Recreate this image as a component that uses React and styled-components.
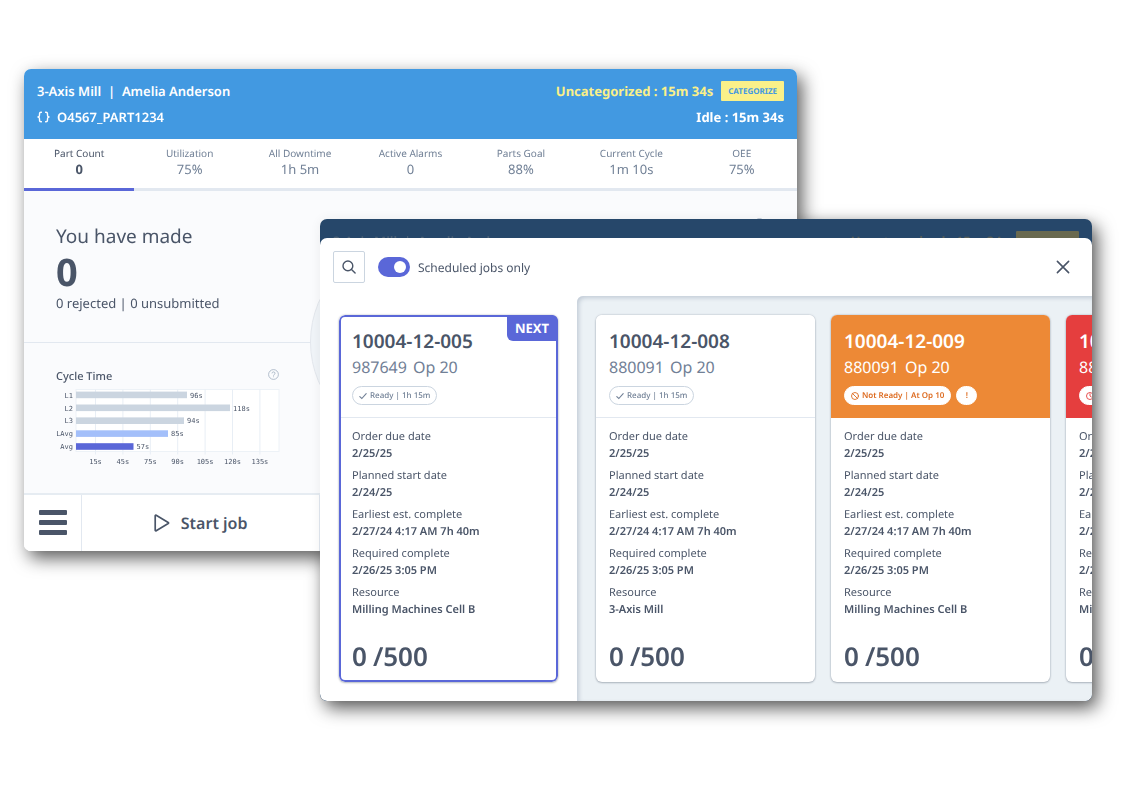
import React from "react";
import styled, { createGlobalStyle, css } from "styled-components";

const GlobalStyle = createGlobalStyle`
  * {
    box-sizing: border-box;
  }

  body {
    margin: 0;
    background: #fff;
    color: #4a5568;
    font-family: "Noto Sans", "Open Sans", sans-serif;
    text-rendering: geometricPrecision;
  }

  button {
    font-family: inherit;
    color: inherit;
    text-rendering: inherit;
    cursor: pointer;
  }
`;

const metrics = [
  { label: "Part Count", value: "0", active: true },
  { label: "Utilization", value: "75%" },
  { label: "All Downtime", value: "1h 5m" },
  { label: "Active Alarms", value: "0" },
  { label: "Parts Goal", value: "88%" },
  { label: "Current Cycle", value: "1m 10s" },
  { label: "OEE", value: "75%" },
];

const cycles = [
  { label: "L1", value: "96s", width: 111, color: "#cbd5e0" },
  { label: "L2", value: "118s", width: 154, color: "#cbd5e0" },
  { label: "L3", value: "94s", width: 108, color: "#cbd5e0" },
  { label: "LAvg", value: "85s", width: 92, color: "#a3bffa" },
  { label: "Avg", value: "57s", width: 57.5, color: "#5a67d8" },
];

const ticks = ["15s", "45s", "75s", "90s", "105s", "120s", "135s"];

const nextJob = {
  number: "10004-12-005",
  part: "987649",
  status: "ready",
  statusText: "Ready | 1h 15m",
  resource: "Milling Machines Cell B",
};

const jobs = [
  {
    number: "10004-12-008",
    part: "880091",
    status: "ready",
    statusText: "Ready | 1h 15m",
    resource: "3-Axis Mill",
  },
  {
    number: "10004-12-009",
    part: "880091",
    status: "blocked",
    statusText: "Not Ready | At Op 10",
    resource: "Milling Machines Cell B",
    alert: true,
  },
  {
    number: "10004-12-010",
    part: "880091",
    status: "late",
    statusText: "Late | 2h 10m",
    resource: "Milling Machines Cell B",
  },
];

const statusColors = {
  blocked: { background: "#ed8936", text: "#dd6b20" },
  late: { background: "#e53e3e", text: "#e53e3e" },
};

const Stage = styled.main`
  display: grid;
  grid-template-columns: 296fr 477fr 295fr;
  align-items: start;
  padding: 69px 34px 85px 24px;
  filter: drop-shadow(5px 7px 9px rgba(0, 0, 0, 0.65));
`;

const windowFrame = css`
  grid-row: 1;
  min-width: 0;
  overflow: hidden;
  border-radius: 7px;
`;

const MachineWindow = styled.section`
  ${windowFrame}
  grid-column: 1 / 3;
  background: #fafbfd;
`;

const JobsWindow = styled.section`
  ${windowFrame}
  grid-column: 2 / 4;
  margin-top: 150px;
  background: #26476a;
  box-shadow: 0 0 12px rgba(0, 0, 0, 0.06);
  z-index: 1;
`;

const Header = styled.header`
  padding: 9px 13px;
  background: #4299e1;
  color: #fff;
  font-size: 13px;
  font-weight: 600;
`;

const HeaderRow = styled.div`
  display: flex;
  align-items: center;
  justify-content: space-between;
  line-height: 26px;
  white-space: pre;
`;

const HeaderGroup = styled.div`
  display: flex;
  align-items: center;
  gap: 7px;
`;

const Idle = styled.div`
  font-weight: 700;
`;

const Uncategorized = styled.div`
  display: flex;
  align-items: center;
  gap: 8px;
  color: #faf089;
  font-weight: 700;
`;

const CategorizeButton = styled.button`
  height: 20px;
  padding: 0 7px;
  border: 0;
  border-radius: 1px;
  background: #faf089;
  color: #4299e1;
  font-size: 8px;
  font-weight: 700;
`;

const DimmedHeader = styled.div`
  height: 19px;
  padding: 9px 13px;
  overflow: hidden;
  color: #4e6377;
  font-size: 13px;
  font-weight: 600;

  ${Uncategorized} {
    color: #595f58;
  }

  ${CategorizeButton} {
    background: #69694f;
    color: #26476a;
  }
`;

const Metrics = styled.nav`
  display: grid;
  grid-template-columns: repeat(7, 1fr);
`;

const Metric = styled.button`
  display: flex;
  flex-direction: column;
  align-items: center;
  height: 52px;
  padding: 6px 0 0;
  border: 0;
  border-bottom: 3px solid ${(props) => (props.$active ? "#5a67d8" : "#e2e8f0")};
  background: #fff;
  color: ${(props) => (props.$active ? "#4a5568" : "#718096")};
  font-size: 10px;
  line-height: 16px;

  strong {
    font-size: 13px;
    font-weight: ${(props) => (props.$active ? 700 : 400)};
  }
`;

const MachineBody = styled.div`
  display: grid;
  grid-template-columns: minmax(0, 287fr) minmax(0, 199fr) minmax(0, 287fr);
  height: 302px;
`;

const Side = styled.div`
  display: flex;
  flex-direction: column;
`;

const Made = styled.div`
  height: 152px;
  padding: 32px 32px 0;
  border-bottom: 1px solid #e2e8f0;
`;

const MadeTitle = styled.h2`
  margin: 0;
  font-size: 19px;
  font-weight: 400;
  line-height: 26px;
`;

const MadeCount = styled.div`
  font-size: 38px;
  font-weight: 700;
  line-height: 46px;
`;

const MadeNote = styled.p`
  margin: 0;
  font-size: 13px;
  line-height: 16px;
`;

const Cycle = styled.div`
  padding: 23px 32px 0;
`;

const CycleHead = styled.div`
  display: flex;
  align-items: center;
  justify-content: space-between;
  height: 16px;
  margin-bottom: 7px;
`;

const CycleTitle = styled.h3`
  margin: 0;
  padding-top: 6px;
  font-size: 11px;
  font-weight: 500;
  line-height: 16px;
`;

const Chart = styled.svg`
  display: block;
  width: 100%;
  height: auto;
  overflow: visible;
  font-family: "DejaVu Sans Mono", monospace;
  font-size: 7px;
  fill: #4a5568;
`;

const Dial = styled.div`
  align-self: center;
  justify-self: center;
  width: 202px;
  height: 202px;
  border: 1px solid #e2e6ec;
  border-radius: 50%;
  background: #f0f4f8;
`;

const HelpCorner = styled.div`
  display: flex;
  justify-content: flex-end;
  padding: 27px 32px;
`;

const ActionBar = styled.footer`
  display: grid;
  grid-template-columns: 58px repeat(3, 1fr);
  height: 58px;
  border-top: 2px solid #e6ecf2;
  background: #fff;
`;

const ActionButton = styled.button`
  display: flex;
  align-items: center;
  justify-content: center;
  gap: 11px;
  padding: 0;
  border: 0;
  border-right: 1px solid #e2e8f0;
  background: #fff;
  font-size: 16px;
  font-weight: 600;
`;

const Sheet = styled.div`
  border-radius: 7px;
  overflow: hidden;
  background: #fff;
`;

const Toolbar = styled.div`
  display: flex;
  align-items: center;
  gap: 13px;
  height: 58px;
  padding: 0 22px 0 13px;
`;

const SearchButton = styled.button`
  display: flex;
  align-items: center;
  justify-content: center;
  width: 32px;
  height: 32px;
  padding: 0;
  border: 1px solid #cbd5e0;
  border-radius: 2px;
  background: #fff;
`;

const SwitchLabel = styled.label`
  display: flex;
  align-items: center;
  gap: 8px;
  font-size: 12px;
`;

const Switch = styled.input`
  display: flex;
  align-items: center;
  justify-content: flex-start;
  appearance: none;
  width: 32px;
  height: 20px;
  margin: 0;
  padding: 0 4px;
  border-radius: 10px;
  background: #cbd5e0;

  &::before {
    content: "";
    width: 12px;
    height: 12px;
    border-radius: 50%;
    background: #fff;
  }

  &:checked {
    justify-content: flex-end;
    background: #5a67d8;
  }
`;

const CloseButton = styled.button`
  display: flex;
  margin-left: auto;
  padding: 0;
  border: 0;
  background: none;
`;

const Board = styled.div`
  display: flex;
`;

const NextColumn = styled.div`
  flex: none;
  padding: 19px;
`;

const Queue = styled.div`
  display: flex;
  flex: 1;
  gap: 16px;
  min-width: 0;
  padding: 19px 0 19px 19px;
  overflow: hidden;
  border-radius: 6px 0 0 0;
  background: #ebf1f5;
  box-shadow: inset 2px 2px 4px #c3ccd7;
`;

const Card = styled.article`
  position: relative;
  display: flex;
  flex: none;
  flex-direction: column;
  width: 219px;
  height: 367px;
  overflow: hidden;
  border-radius: 6px;
  background: #fff;
  box-shadow: 0 0 2px rgba(74, 85, 104, 0.4), 0 1px 2px rgba(74, 85, 104, 0.3);

  &::after {
    content: "";
    position: absolute;
    inset: 0;
    border: ${(props) => (props.$next ? "2px solid #5a67d8" : "0")};
    border-radius: 6px;
    pointer-events: none;
  }
`;

const CardHead = styled.div`
  height: 103px;
  padding: 13px;
  border-bottom: 1px solid ${(props) => props.$background || "#e2e8f0"};
  background: ${(props) => props.$background || "#fff"};
  color: ${(props) => (props.$background ? "#fff" : "#4a5568")};
`;

const JobNumber = styled.h3`
  margin: 0;
  font-size: 19px;
  font-weight: 600;
  line-height: 26px;
`;

const JobPart = styled.div`
  display: flex;
  gap: 6px;
  color: ${(props) => (props.$light ? "#fff" : "#718096")};
  font-size: 16px;
  line-height: 26px;
`;

const Pills = styled.div`
  display: flex;
  gap: 5px;
  margin-top: 6px;
`;

const Pill = styled.span`
  display: flex;
  align-items: center;
  justify-content: center;
  gap: 3px;
  min-width: 21px;
  height: 19px;
  padding: 0 6px;
  border: 1px solid ${(props) => (props.$color ? "#fff" : "#cbd5e0")};
  border-radius: 10px;
  background: #fff;
  color: ${(props) => props.$color || "#718096"};
  font-size: 8px;
  font-weight: ${(props) => (props.$color ? 600 : 500)};
  white-space: nowrap;
`;

const NextTag = styled.span`
  position: absolute;
  top: 0;
  right: 0;
  padding: 0 9px 0 8px;
  border-radius: 0 0 0 6px;
  background: #5a67d8;
  color: #fff;
  font-size: 13px;
  font-weight: 700;
  line-height: 26px;
`;

const Details = styled.dl`
  margin: 0;
  padding: 10px 13px 0;
  font-size: 11px;
  line-height: 17px;

  dd {
    margin: 0 0 5px;
    font-weight: 600;
  }
`;

const Quantity = styled.div`
  margin-top: auto;
  padding: 0 13px 9px;
  font-size: 26px;
  font-weight: 600;
  line-height: 34px;

  span {
    margin-left: 6px;
  }
`;

const HelpIcon = () => (
  <svg width="11" height="11" viewBox="0 0 11 11" fill="none" stroke="#a0aec0" strokeWidth="0.8">
    <circle cx="5.5" cy="5.5" r="4.9" />
    <path d="M4 4.4a1.5 1.5 0 1 1 2.2 1.3c-.5.3-.7.5-.7 1M5.5 7.4v.8" />
  </svg>
);

const BracesIcon = () => (
  <svg width="13" height="12" viewBox="0 0 13 12" fill="none" stroke="#fff" strokeWidth="1.4" strokeLinecap="round" strokeLinejoin="round">
    <path d="M4.4 1.2H4C2.9 1.2 2.5 1.8 2.5 2.7v1.5C2.5 5.2 2 5.8 1 6c1 .2 1.5.8 1.5 1.8v1.5c0 .9.4 1.5 1.5 1.5h.4" />
    <path d="M8.6 1.2H9c1.1 0 1.5.6 1.5 1.5v1.5c0 1 .5 1.6 1.5 1.8-1 .2-1.5.8-1.5 1.8v1.5c0 .9-.4 1.5-1.5 1.5h-.4" />
  </svg>
);

const MenuIcon = () => (
  <svg width="28" height="26" viewBox="0 0 28 26" fill="#4a5568">
    <rect y="0" width="28" height="5" rx="1" />
    <rect y="10" width="28" height="5" rx="1" />
    <rect y="20" width="28" height="5" rx="1" />
  </svg>
);

const PlayIcon = () => (
  <svg width="16" height="18" viewBox="0 0 16 18" fill="none" stroke="#4a5568" strokeWidth="1.7" strokeLinejoin="round">
    <path d="M1.2 1.8v14.4c0 .6.5.8 1 .5l12-7.1c.5-.3.5-.9 0-1.2l-12-7.1c-.5-.3-1-.1-1 .5z" />
  </svg>
);

const SearchIcon = () => (
  <svg width="14" height="14" viewBox="0 0 14 14" fill="none" stroke="#4a5568" strokeWidth="1.4" strokeLinecap="round">
    <circle cx="5.9" cy="5.9" r="4.9" />
    <path d="M9.5 9.5l3.6 3.6" />
  </svg>
);

const CloseIcon = () => (
  <svg width="14" height="14" viewBox="0 0 14 14" fill="none" stroke="#4a5568" strokeWidth="1.6" strokeLinecap="round">
    <path d="M1.4 1.4l11.2 11.2M12.6 1.4L1.4 12.6" />
  </svg>
);

const StatusIcon = ({ status }) => (
  <svg width="8" height="8" viewBox="0 0 8 8" fill="none" stroke="currentColor" strokeWidth={status === "ready" ? 1.1 : 0.9} strokeLinecap="round">
    {status === "ready" && <path d="M.8 4.6l2 1.9L7.2 1.6" />}
    {status === "blocked" && (
      <>
        <circle cx="4" cy="4" r="3.5" />
        <path d="M1.6 1.6l4.8 4.8" />
      </>
    )}
    {status === "late" && (
      <>
        <circle cx="4" cy="4" r="3.5" />
        <path d="M4 1.8V4l1.4 1" />
      </>
    )}
  </svg>
);

const CycleChart = () => (
  <Chart viewBox="0 0 223 78" role="img" aria-label="Cycle Time">
    <rect x="20" y="0.5" width="203" height="62" fill="#fff" stroke="#edf2f7" />
    {ticks.map((tick, i) => (
      <g key={tick}>
        <path d={`M${39.5 + i * 27.4} 0.5v65`} stroke="#e8eef5" />
        <text x={39.5 + i * 27.4} y="75" textAnchor="middle">
          {tick}
        </text>
      </g>
    ))}
    {cycles.map((cycle, i) => (
      <g key={cycle.label}>
        <rect x="20" y={2.6 + i * 12.9} width={cycle.width} height="6.6" fill={cycle.color} />
        <text x="17" y={8.6 + i * 12.9} textAnchor="end">
          {cycle.label}
        </text>
        <text x={23 + cycle.width} y={8.6 + i * 12.9}>
          {cycle.value}
        </text>
      </g>
    ))}
  </Chart>
);

const JobCard = ({ job, next }) => {
  const colors = statusColors[job.status] || {};

  return (
    <Card $next={next}>
      <CardHead $background={colors.background}>
        <JobNumber>{job.number}</JobNumber>
        <JobPart $light={!!colors.background}>
          <span>{job.part}</span>
          <span>Op 20</span>
        </JobPart>
        <Pills>
          <Pill $color={colors.text}>
            <StatusIcon status={job.status} />
            {job.statusText}
          </Pill>
          {job.alert && <Pill $color={colors.text}>!</Pill>}
        </Pills>
      </CardHead>
      <Details>
        <dt>Order due date</dt>
        <dd>2/25/25</dd>
        <dt>Planned start date</dt>
        <dd>2/24/25</dd>
        <dt>Earliest est. complete</dt>
        <dd>2/27/24 4:17 AM 7h 40m</dd>
        <dt>Required complete</dt>
        <dd>2/26/25 3:05 PM</dd>
        <dt>Resource</dt>
        <dd>{job.resource}</dd>
      </Details>
      <Quantity>
        0<span>/500</span>
      </Quantity>
      {next && <NextTag>NEXT</NextTag>}
    </Card>
  );
};

const App = () => (
  <>
    <GlobalStyle />
    <Stage>
      <MachineWindow>
        <Header>
          <HeaderRow>
            <span>3-Axis Mill  |  Amelia Anderson</span>
            <Uncategorized>
              Uncategorized : 15m 34s
              <CategorizeButton>CATEGORIZE</CategorizeButton>
            </Uncategorized>
          </HeaderRow>
          <HeaderRow>
            <HeaderGroup>
              <BracesIcon />
              O4567_PART1234
            </HeaderGroup>
            <Idle>Idle : 15m 34s</Idle>
          </HeaderRow>
        </Header>
        <Metrics>
          {metrics.map((metric) => (
            <Metric key={metric.label} $active={metric.active}>
              {metric.label}
              <strong>{metric.value}</strong>
            </Metric>
          ))}
        </Metrics>
        <MachineBody>
          <Side>
            <Made>
              <MadeTitle>You have made</MadeTitle>
              <MadeCount>0</MadeCount>
              <MadeNote>0 rejected | 0 unsubmitted</MadeNote>
            </Made>
            <Cycle>
              <CycleHead>
                <CycleTitle>Cycle Time</CycleTitle>
                <HelpIcon />
              </CycleHead>
              <CycleChart />
            </Cycle>
          </Side>
          <Dial />
          <HelpCorner>
            <HelpIcon />
          </HelpCorner>
        </MachineBody>
        <ActionBar>
          <ActionButton aria-label="Menu">
            <MenuIcon />
          </ActionButton>
          <ActionButton>
            <PlayIcon />
            Start job
          </ActionButton>
        </ActionBar>
      </MachineWindow>

      <JobsWindow>
        <DimmedHeader>
          <HeaderRow>
            <span>3-Axis Mill  |  Amelia Anderson</span>
            <Uncategorized>
              Uncategorized : 15m 34s
              <CategorizeButton>CATEGORIZE</CategorizeButton>
            </Uncategorized>
          </HeaderRow>
        </DimmedHeader>
        <Sheet>
          <Toolbar>
            <SearchButton aria-label="Search jobs">
              <SearchIcon />
            </SearchButton>
            <SwitchLabel>
              <Switch type="checkbox" role="switch" defaultChecked />
              Scheduled jobs only
            </SwitchLabel>
            <CloseButton aria-label="Close">
              <CloseIcon />
            </CloseButton>
          </Toolbar>
          <Board>
            <NextColumn>
              <JobCard job={nextJob} next />
            </NextColumn>
            <Queue>
              {jobs.map((job) => (
                <JobCard key={job.number} job={job} />
              ))}
            </Queue>
          </Board>
        </Sheet>
      </JobsWindow>
    </Stage>
  </>
);

export default App;
